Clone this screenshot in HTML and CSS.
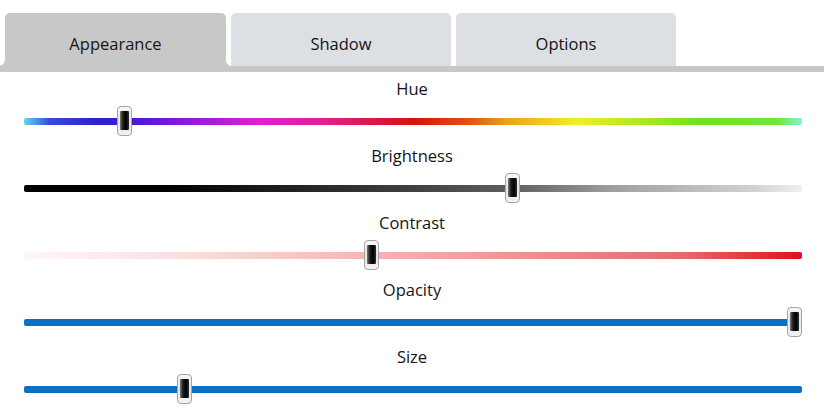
FILE: index.html
```html
<!DOCTYPE html>
<html>
<head>
<meta charset="utf-8">
<link rel="stylesheet" href="styles.css">
</head>
<body>
<div class="tabbar">
  <div class="tab active">Appearance</div>
  <div class="tab">Shadow</div>
  <div class="tab">Options</div>
</div>
<div class="strip"></div>
<div class="sliders">
  <div class="row">
    <div class="label">Hue</div>
    <div class="track-wrap"><div class="track hue"></div><div class="thumb" style="--v:0.1225"></div></div>
  </div>
  <div class="row">
    <div class="label">Brightness</div>
    <div class="track-wrap"><div class="track bright"></div><div class="thumb" style="--v:0.631"></div></div>
  </div>
  <div class="row">
    <div class="label">Contrast</div>
    <div class="track-wrap"><div class="track contrast"></div><div class="thumb" style="--v:0.445"></div></div>
  </div>
  <div class="row">
    <div class="label">Opacity</div>
    <div class="track-wrap"><div class="track blue"></div><div class="thumb" style="--v:1"></div></div>
  </div>
  <div class="row">
    <div class="label">Size</div>
    <div class="track-wrap"><div class="track blue"></div><div class="thumb" style="--v:0.2"></div></div>
  </div>
</div>
</body>
</html>
```
FILE: styles.css
```css
html, body {
  margin: 0;
  padding: 0;
  background: #ffffff;
}
body {
  font-family: "Open Sans", "Noto Sans", sans-serif;
  font-size: 16.5px;
  color: #151515;
  width: 824px;
  height: 414px;
  overflow: hidden;
}
.tabbar {
  display: flex;
  gap: 5px;
  padding: 13px 0 0 5px;
}
.tab {
  position: relative;
  width: 220px;
  height: 53px;
  box-sizing: border-box;
  padding-top: 7px;
  display: flex;
  align-items: center;
  justify-content: center;
  background: #dcdfe4;
  border-radius: 5px 5px 0 0;
}
.tab.active {
  width: 221px;
  background: #c8c8c8;
}
.tab.active::before,
.tab.active::after {
  content: "";
  position: absolute;
  bottom: 0;
  width: 6px;
  height: 6px;
}
.tab.active::before {
  left: -6px;
  background: radial-gradient(circle at 0 0, transparent 5.5px, #c8c8c8 6px);
}
.tab.active::after {
  right: -5px;
  width: 5px;
  height: 5px;
  background: radial-gradient(circle at 100% 0, transparent 4.5px, #c8c8c8 5px);
}
.strip {
  height: 6px;
  background: #c8c8c8;
}
.sliders {
  display: flex;
  flex-direction: column;
}
.row {
  height: 67px;
  box-sizing: border-box;
  padding-top: 6px;
  display: flex;
  flex-direction: column;
}
.label {
  height: 22px;
  line-height: 22px;
  text-align: center;
}
.track-wrap {
  position: relative;
  height: 30px;
  margin: 6px 22px 0 24px;
  display: flex;
  align-items: center;
}
.track {
  width: 100%;
  height: 7px;
  border-radius: 2px;
}
.hue {
  background: linear-gradient(to right,
    #62d6f2 0%,
    #3a4ad8 3.3%,
    #2b1fc8 9.8%,
    #5a18d8 16%,
    #e020d8 30%,
    #e0208a 39%,
    #d81010 50%,
    #e05010 57%,
    #eaa020 62%,
    #f0f020 71%,
    #70e020 87%,
    #70e838 97%,
    #80f0e0 100%);
}
.bright {
  background: linear-gradient(to right,
    #000000 0%,
    #000000 18%,
    #3c3c3c 48%,
    #606060 63%,
    #a0a0a0 76%,
    #d2d2d2 94%,
    #f0f0f0 100%);
}
.contrast {
  background: linear-gradient(to right,
    #fff6f6 0%,
    #fbe0e0 20%,
    #f4b4b4 45%,
    #ee9090 65%,
    #e86868 85%,
    #e01020 100%);
}
.blue {
  background: #0b6fc2;
}
.thumb {
  position: absolute;
  top: 0;
  left: calc((100% - 15px) * var(--v));
  width: 15px;
  height: 30px;
  box-sizing: border-box;
  border: 1px solid #a4a4a4;
  border-radius: 4px;
  background: linear-gradient(to bottom, #f6f6f6, #e4e4e4 50%, #f2f2f2);
}
.thumb::after {
  content: "";
  position: absolute;
  top: 4px;
  bottom: 5px;
  left: 2px;
  right: 2px;
  border-radius: 1px;
  background: linear-gradient(to right, #7a7a7a, #222222 30%, #000000 65%, #2e2e2e);
}
```
